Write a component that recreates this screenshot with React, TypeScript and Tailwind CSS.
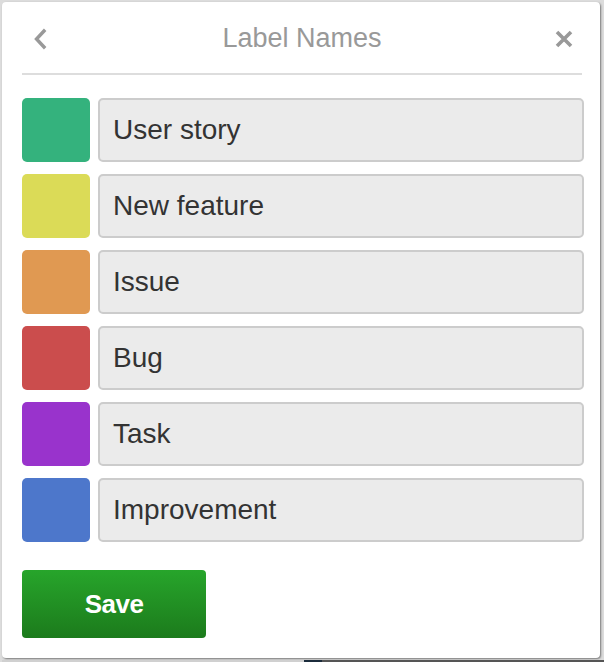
const LABELS = [
  { color: "bg-[#34b27d]", name: "User story" },
  { color: "bg-[#dbdb57]", name: "New feature" },
  { color: "bg-[#e09952]", name: "Issue" },
  { color: "bg-[#cb4d4d]", name: "Bug" },
  { color: "bg-[#9933cc]", name: "Task" },
  { color: "bg-[#4d77cb]", name: "Improvement" },
];

export default function App() {
  return (
    <div className="w-[604px] h-[662px] bg-[#dcdcdc] flex flex-col overflow-hidden font-['Liberation_Sans',Arial,sans-serif]">
      <div className="flex flex-1">
        <div className="mt-[2px] ml-[2px] w-[598px] h-[656px] bg-white rounded-[4px] shadow-[1px_1px_2px_rgba(0,0,0,0.45)] pl-5 pr-4 flex flex-col">
          <div className="h-[73px] mr-[2px] flex items-center justify-between border-b-2 border-[#dddddd] pt-[2px]">
            <button className="w-[30px] h-[30px] flex items-center pl-[11px]">
              <svg width="14" height="22" viewBox="0 0 14 22" fill="none">
                <path d="M11 3 L3.5 11 L11 19" stroke="#999" strokeWidth="3.4" strokeLinecap="square" />
              </svg>
            </button>
            <div className="text-[27px] text-[#999999] leading-none">Label Names</div>
            <button className="w-[30px] h-[30px] flex items-center justify-end pr-[9px]">
              <svg width="18" height="18" viewBox="0 0 18 18" fill="none">
                <path d="M2 2 L16 16 M16 2 L2 16" stroke="#999" strokeWidth="3.6" />
              </svg>
            </button>
          </div>
          <div className="flex flex-col gap-3 mt-[23px]">
            {LABELS.map((label) => (
              <div key={label.name} className="flex gap-2 h-16">
                <div className={`w-[68px] rounded-[5px] ${label.color}`} />
                <div className="flex-1 bg-[#ebebeb] border-2 border-[#cccccc] rounded-[5px] flex items-center px-[13px] text-[28px] text-[#333333]">
                  {label.name}
                </div>
              </div>
            ))}
          </div>
          <button className="mt-7 w-[184px] h-[68px] rounded-[4px] bg-gradient-to-b from-[#27a52b] to-[#1c7b1c] text-white font-bold text-[26px] tracking-[-0.5px] flex items-center justify-center">
            Save
          </button>
        </div>
        <div className="flex-1" />
      </div>
      <div className="flex h-[2px] ml-[2px]">
        <div className="w-[302px] bg-[#d0d0d0]" />
        <div className="w-[18px] bg-[#1b2b3b]" />
        <div className="flex-1 bg-[#555555]" />
      </div>
    </div>
  );
}
